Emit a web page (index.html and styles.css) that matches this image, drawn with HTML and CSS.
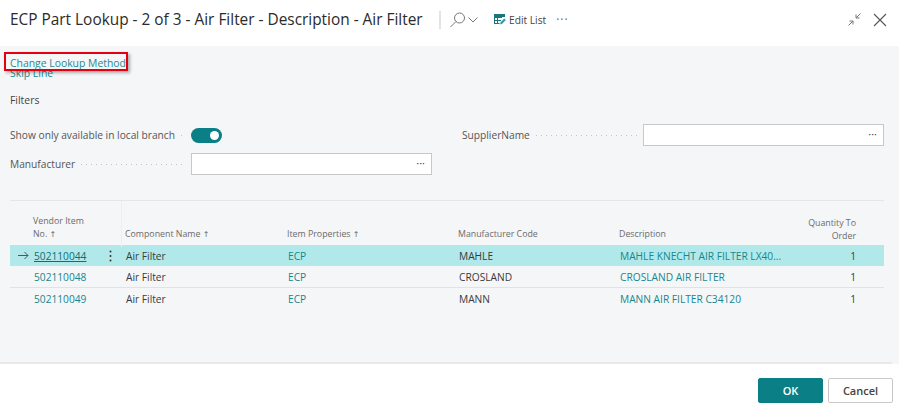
FILE: index.html
```html
<!DOCTYPE html>
<html lang="en">
<head>
  <meta charset="UTF-8">
  <title>ECP Part Lookup</title>
  <link rel="stylesheet" href="styles.css">
</head>
<body>

  <header class="top">
    <h1>ECP Part Lookup - 2 of 3 - Air Filter - Description - Air Filter</h1>
    <div class="divider"></div>
    <svg class="icon-search" width="16" height="16" viewBox="0 0 16 16" fill="none" stroke="#777" stroke-width="1">
      <circle cx="9.500" cy="6" r="5"/>
      <path d="M6 9.500L0.500 15"/>
    </svg>
    <svg class="icon-chevron" width="10" height="6" viewBox="0 0 10 6" fill="none" stroke="#777" stroke-width="1">
      <path d="M0.500 0.500l4.500 4.500 4.500-4.500"/>
    </svg>
    <svg class="icon-edit" width="12" height="11" viewBox="0 0 12 11">
      <path d="M0 0h11v3H0z" fill="#17777f"/>
      <path d="M0 3h8v1H4v2h3v1H4v2h1.500v1H0zM1 4v2h2V4zm0 3v2h2V7z" fill="#17777f"/>
      <path d="M6 10.500l.7-2.300L10.200 4.500l1.600 1.500L8.200 9.800z" fill="#2a9aa5"/>
    </svg>
    <span class="edit-label">Edit List</span>
    <span class="more">···</span>
    <div class="window-btns">
      <svg width="13" height="13" viewBox="0 0 13 13" fill="none" stroke="#777" stroke-width="1">
        <path d="M12.500 0.500L8 5M8 1.500V5h3.500M0.500 12.500L5 8M1.500 8H5v3.500"/>
      </svg>
      <svg width="14" height="14" viewBox="0 0 14 14" fill="none" stroke="#555" stroke-width="1.100">
        <path d="M1 1l12 12M13 1L1 13"/>
      </svg>
    </div>
  </header>

  <main class="content">
    <div class="actions">
      <a class="action highlighted">Change Lookup Method</a>
      <a class="action">Skip Line</a>
    </div>

    <div class="filters-title">Filters</div>

    <div class="filters">
      <div class="filter-col">
        <div class="field">
          <label>Show only available in local branch</label>
          <span class="dots"></span>
          <span class="toggle"><span class="knob"></span></span>
        </div>
        <div class="field">
          <label>Manufacturer</label>
          <span class="dots"></span>
          <div class="input">···</div>
        </div>
      </div>
      <div class="filter-col">
        <div class="field">
          <label>SupplierName</label>
          <span class="dots"></span>
          <div class="input">···</div>
        </div>
      </div>
    </div>

    <div class="table">
      <div class="row head">
        <div></div>
        <div class="th vendor">Vendor Item<br>No. <span class="sort">↑</span></div>
        <div class="th">Component Name <span class="sort">↑</span></div>
        <div class="th">Item Properties <span class="sort">↑</span></div>
        <div class="th">Manufacturer Code</div>
        <div class="th">Description</div>
        <div class="th num">Quantity To<br>Order</div>
      </div>
      <div class="row selected">
        <div class="arrow">
          <svg width="11" height="9" viewBox="0 0 11 9" fill="none" stroke="#555" stroke-width="1">
            <path d="M0 4.500h10M6.500 1l3.500 3.500L6.500 8"/>
          </svg>
        </div>
        <div class="link key">
          <span class="key-text">502110044</span>
          <svg class="kebab" width="3" height="12" viewBox="0 0 3 12" fill="#333">
            <circle cx="1.500" cy="1.500" r="1"/>
            <circle cx="1.500" cy="6" r="1"/>
            <circle cx="1.500" cy="10.500" r="1"/>
          </svg>
        </div>
        <div class="td">Air Filter</div>
        <div class="link">ECP</div>
        <div class="td">MAHLE</div>
        <div class="link">MAHLE KNECHT AIR FILTER LX40...</div>
        <div class="td num">1</div>
      </div>
      <div class="row lined">
        <div></div>
        <div class="link">502110048</div>
        <div class="td">Air Filter</div>
        <div class="link">ECP</div>
        <div class="td">CROSLAND</div>
        <div class="link">CROSLAND AIR FILTER</div>
        <div class="td num">1</div>
      </div>
      <div class="row">
        <div></div>
        <div class="link">502110049</div>
        <div class="td">Air Filter</div>
        <div class="link">ECP</div>
        <div class="td">MANN</div>
        <div class="link">MANN AIR FILTER C34120</div>
        <div class="td num">1</div>
      </div>
    </div>

    <div class="rule"></div>
  </main>

  <footer class="bottom">
    <button class="btn primary">OK</button>
    <button class="btn">Cancel</button>
  </footer>

</body>
</html>
```

FILE: styles.css
```css
* {
  box-sizing: border-box;
}

body {
  margin: 0;
  height: 414px;
  overflow: hidden;
  font-family: "Open Sans", "Noto Sans", sans-serif;
  font-size: 10.2px;
  color: #444;
  background: white;
}

.top {
  height: 46px;
  display: flex;
  align-items: center;
  padding: 0 12px 7px 10px;
}

.top h1 {
  margin: 0;
  font-size: 15.4px;
  font-weight: 400;
  color: #2b2b2b;
  white-space: nowrap;
  width: 429px;
}

.divider {
  width: 2px;
  height: 18px;
  background: #e3e3e3;
}

.icon-search {
  margin-left: 9px;
}

.icon-chevron {
  margin-left: 2px;
}

.icon-edit {
  margin-left: 16px;
}

.edit-label {
  margin-left: 3px;
  color: #444;
}

.more {
  margin-left: 10px;
  font-size: 12px;
  letter-spacing: 1px;
  color: #666;
}

.window-btns {
  margin-left: auto;
  display: flex;
  gap: 12px;
  align-items: center;
}

.content {
  height: 318px;
  background: #f5f6f8;
  padding: 10px 15px 0 10px;
  display: flex;
  flex-direction: column;
}

.actions {
  display: flex;
  flex-direction: column;
  align-items: flex-start;
  height: 27px;
}

.action {
  display: block;
  height: 10px;
  font-size: 10.4px;
  line-height: 14px;
  color: #1d8a92;
}

.highlighted {
  position: relative;
  z-index: 1;
}

.highlighted::after {
  content: "";
  box-sizing: border-box;
  position: absolute;
  left: -6px;
  top: -4px;
  width: 124px;
  height: 19px;
  border: 2px solid #e5000f;
  box-shadow: 2px 2px 3px rgba(0, 0, 0, 0.3);
}

.filters-title {
  margin-top: 10px;
  font-size: 10.4px;
  color: #444;
  line-height: 14px;
}

.filters {
  display: grid;
  grid-template-columns: 422px 1fr;
  gap: 30px;
  margin-top: 17px;
  height: 77px;
  border-bottom: 1px solid #e6e6e6;
}

.filter-col {
  display: flex;
  flex-direction: column;
  gap: 7px;
}

.field {
  display: flex;
  align-items: center;
  height: 22px;
}

.field label {
  color: #555;
  white-space: nowrap;
}

.dots {
  flex: 1;
  height: 1px;
  margin: 0 6px;
  background: repeating-linear-gradient(90deg, #c4c4c4 0 1px, transparent 1px 5px);
}

.input {
  width: 241px;
  height: 22px;
  padding: 0 6px;
  background: white;
  border: 1px solid #c8c8c8;
  text-align: right;
  line-height: 18px;
  font-size: 11px;
}

.toggle {
  width: 31px;
  height: 15px;
  margin-right: 210px;
  border-radius: 8px;
  background: #0b7f86;
  display: flex;
  justify-content: flex-end;
  align-items: center;
  padding-right: 3px;
}

.knob {
  width: 9px;
  height: 9px;
  border-radius: 50%;
  background: white;
}

.row {
  display: grid;
  grid-template-columns: 24px 92px 162px 171px 161px 176px 88px;
  align-items: center;
  height: 22px;
}

.head {
  height: 44px;
  align-items: end;
  color: #6b6b6b;
  font-size: 8.8px;
  line-height: 12.5px;
}

.th {
  margin-left: -1px;
  padding-bottom: 7px;
  white-space: nowrap;
}

.th.vendor {
  align-self: stretch;
  padding-top: 14px;
  margin-right: 4px;
  border-right: 1px solid #eeeeee;
}

.th.num {
  padding-bottom: 5px;
}

.sort {
  font-family: "DejaVu Sans", sans-serif;
  font-size: 8px;
  line-height: 1;
}

.selected {
  background: #b1e9ea;
  height: 21px;
}

.lined {
  border-bottom: 1px solid #e2e2e2;
}

.arrow {
  display: flex;
  justify-content: center;
  padding-left: 3px;
}

.link {
  color: #17868f;
  white-space: nowrap;
}

.key {
  display: flex;
  justify-content: space-between;
  align-items: center;
  padding-right: 14px;
}

.key-text {
  text-decoration: underline;
  color: #0f6e75;
}

.td {
  color: #3a3a3a;
}

.num {
  text-align: right;
  padding-right: 28px;
}

.rule {
  margin: auto -8px 0 -10px;
  height: 2px;
  background: #e9e9e9;
}

.bottom {
  display: flex;
  justify-content: flex-end;
  gap: 5px;
  padding: 14px 6px 0 0;
}

.btn {
  width: 65px;
  height: 25px;
  padding: 0;
  font-family: inherit;
  font-size: 11px;
  font-weight: 600;
  color: #444;
  background: white;
  border: 1px solid #c8c8c8;
  border-radius: 2px;
}

.primary {
  background: #0b7f86;
  border-color: #0b7f86;
  color: white;
}
```
